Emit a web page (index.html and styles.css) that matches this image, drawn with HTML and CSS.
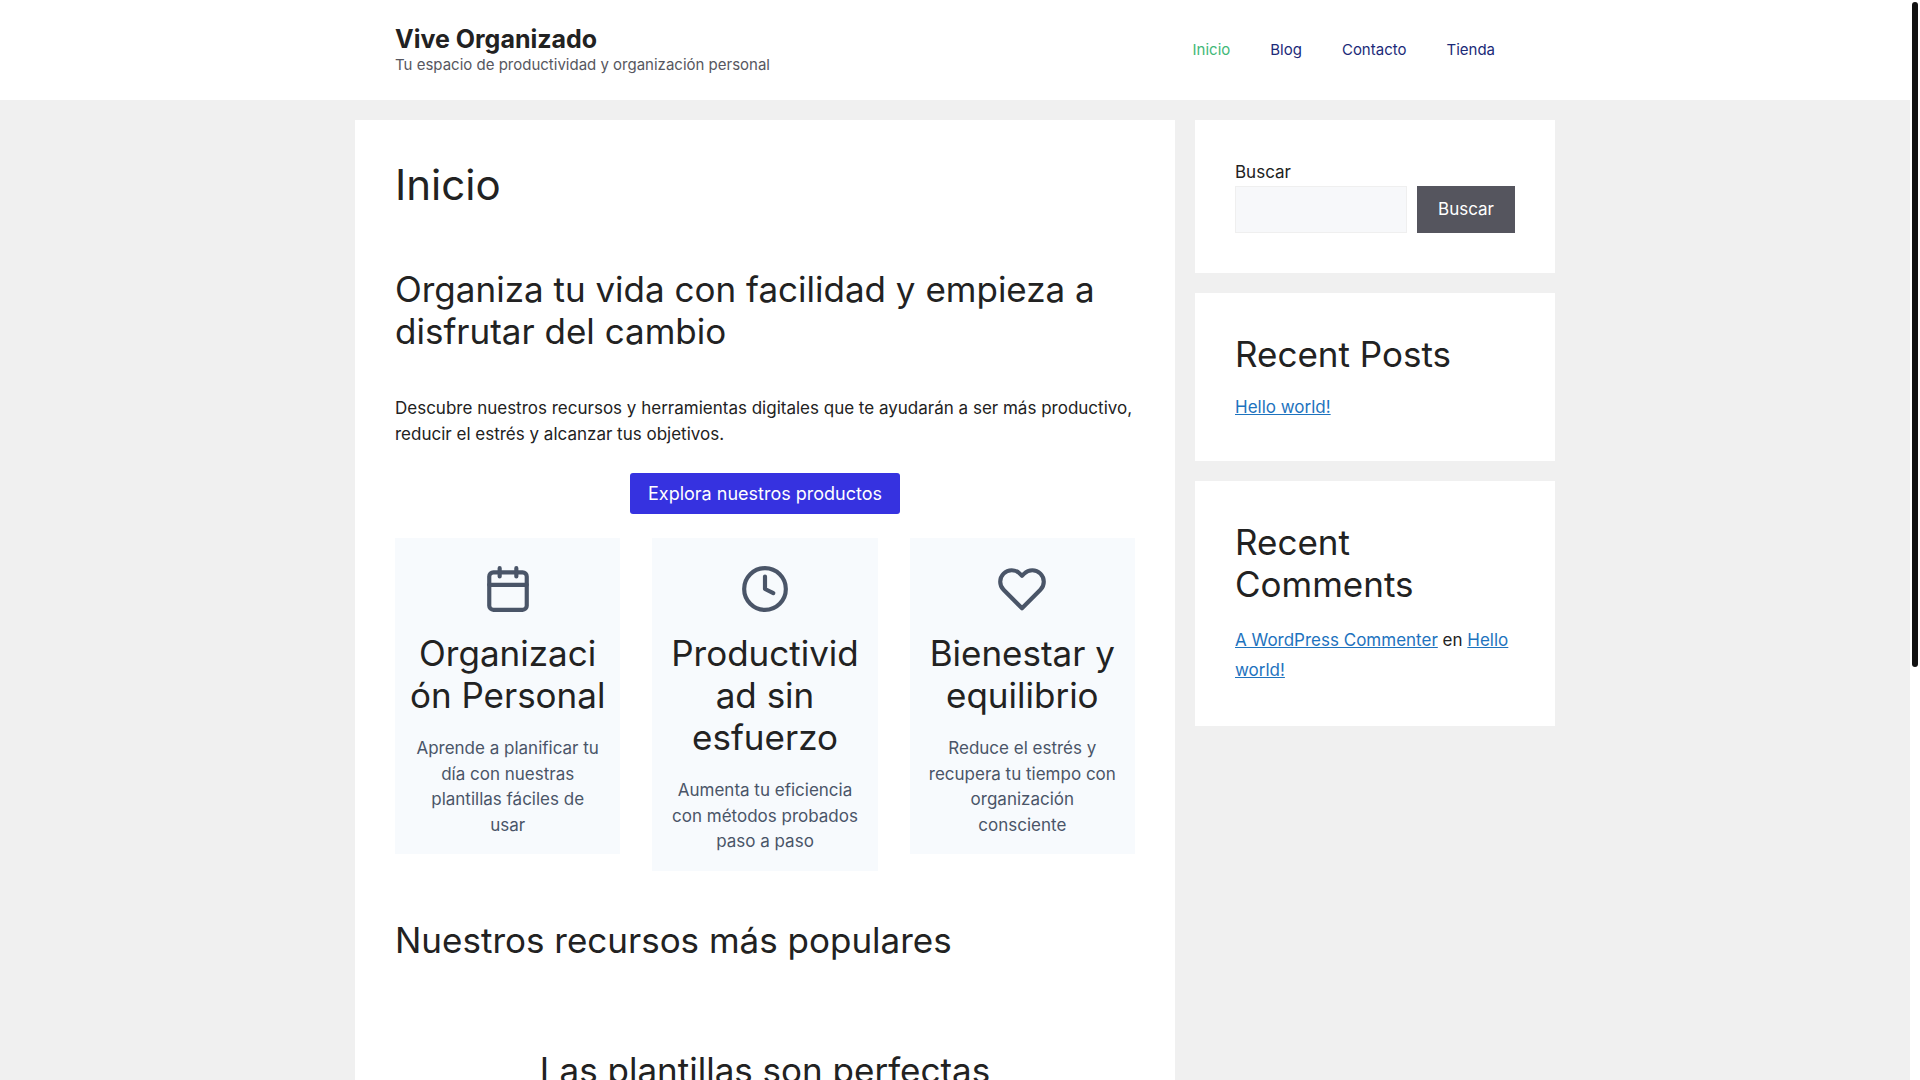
FILE: index.html
```html
<!DOCTYPE html>
<html lang="es">
<head>
<meta charset="utf-8">
<meta name="viewport" content="width=device-width, initial-scale=1">
<title>Vive Organizado</title>
<link rel="stylesheet" href="styles.css">
</head>
<body>
<div class="page">
  <header class="site-header">
    <div class="container header-inner">
      <div class="branding">
        <a class="site-title" href="#">Vive Organizado</a>
        <p class="tagline">Tu espacio de productividad y organización personal</p>
      </div>
      <nav class="main-nav">
        <a class="current" href="#">Inicio</a>
        <a href="#">Blog</a>
        <a href="#">Contacto</a>
        <a href="#">Tienda</a>
      </nav>
    </div>
  </header>

  <div class="container layout">
    <main class="content box">
      <h1>Inicio</h1>
      <section class="hero">
        <h2>Organiza tu vida con facilidad y empieza a disfrutar del cambio</h2>
        <p>Descubre nuestros recursos y herramientas digitales que te ayudarán a ser más productivo, reducir el estrés y alcanzar tus objetivos.</p>
        <a class="cta" href="#">Explora nuestros productos</a>
      </section>
      <section class="cards">
        <article class="card">
          <svg class="icon" viewBox="0 0 24 24" aria-hidden="true"><rect x="3" y="4" width="18" height="18" rx="2"/><path d="M16 2v4M8 2v4M3 10h18"/></svg>
          <h2>Organización Personal</h2>
          <p>Aprende a planificar tu día con nuestras plantillas fáciles de usar</p>
        </article>
        <article class="card">
          <svg class="icon" viewBox="0 0 24 24" aria-hidden="true"><circle cx="12" cy="12" r="10"/><path d="M12 6v6l4 2"/></svg>
          <h2>Productividad sin esfuerzo</h2>
          <p>Aumenta tu eficiencia con métodos probados paso a paso</p>
        </article>
        <article class="card">
          <svg class="icon" viewBox="0 0 24 24" aria-hidden="true"><path d="M20.84 4.61a5.5 5.5 0 0 0-7.78 0L12 5.67l-1.06-1.06a5.5 5.5 0 0 0-7.78 7.78l1.06 1.06L12 21.23l7.78-7.78 1.06-1.06a5.5 5.5 0 0 0 0-7.78z"/></svg>
          <h2>Bienestar y equilibrio</h2>
          <p>Reduce el estrés y recupera tu tiempo con organización consciente</p>
        </article>
      </section>
      <h2 class="section-title">Nuestros recursos más populares</h2>
      <h2 class="quote">Las plantillas son perfectas</h2>
    </main>

    <aside class="sidebar">
      <section class="box">
        <form class="search">
          <label for="search">Buscar</label>
          <div class="search-row">
            <input id="search" type="search">
            <button type="submit">Buscar</button>
          </div>
        </form>
      </section>
      <section class="box">
        <h2>Recent Posts</h2>
        <ul class="posts"><li><a href="#">Hello world!</a></li></ul>
      </section>
      <section class="box">
        <h2>Recent Comments</h2>
        <ol class="comments"><li><a href="#">A WordPress Commenter</a> en <a href="#">Hello world!</a></li></ol>
      </section>
    </aside>
  </div>
</div>
<div class="scroll-rail" aria-hidden="true"><div class="scroll-thumb"></div></div>
</body>
</html>
```
FILE: styles.css
```css
* { box-sizing: border-box; }

body, h1, h2, p, ul, ol {
  margin: 0;
  padding: 0;
}

body {
  font-family: Inter, "Liberation Sans", sans-serif;
  font-size: 17px;
  line-height: 1.5;
  color: #222;
  background: #f0f0f0;
}

.page {
  height: 100vh;
  overflow-y: auto;
  scrollbar-width: none;
  padding-right: 10px;
}

.container {
  max-width: 1200px;
  margin: 0 auto;
}

h1, h2 {
  font-weight: 400;
  line-height: 1.2;
}

h1 { font-size: 42px; }
h2 { font-size: 35px; }

a { color: #1e73be; }
ul, ol { list-style: none; }

/* Header */
.site-header { background: #fff; }

.header-inner {
  display: flex;
  justify-content: space-between;
  align-items: center;
  padding: 20px 40px;
}

.site-title {
  display: block;
  font-size: 25px;
  font-weight: 700;
  line-height: 30px;
  color: #222;
  text-decoration: none;
}

.tagline {
  font-size: 15px;
  color: #575760;
}

.main-nav { display: flex; }

.main-nav a {
  padding: 0 20px;
  font-size: 15px;
  line-height: 60px;
  color: #1b2a78;
  text-decoration: none;
}

.main-nav .current { color: #3fb878; }

/* Columns */
.layout {
  display: grid;
  grid-template-columns: minmax(0, 1fr) 360px;
  align-items: start;
  gap: 20px;
  padding-top: 20px;
}

.box {
  padding: 40px;
  background: #fff;
}

.hero {
  display: flex;
  flex-direction: column;
  padding-top: 58px;
}

.hero p { margin: 44px 0 26px; }

.cta {
  align-self: center;
  padding: 7px 18px;
  border-radius: 3px;
  background: #3632e0;
  color: #fff;
  font-size: 18px;
  text-decoration: none;
}

.cards {
  display: grid;
  grid-template-columns: repeat(3, minmax(0, 1fr));
  align-items: start;
  gap: 32px;
  padding-top: 24px;
}

.card {
  padding: 26px 14px 16px;
  background: #f7fafd;
  text-align: center;
  overflow-wrap: break-word;
}

.card p {
  margin-top: 20px;
  padding: 0 4px;
  color: #4a5568;
}

.icon {
  display: block;
  width: 50px;
  height: 50px;
  margin: 0 auto 18px;
  fill: none;
  stroke: #4a5568;
  stroke-width: 2;
  stroke-linecap: round;
  stroke-linejoin: round;
}

.section-title { margin-top: 48px; }

.quote {
  margin-top: 88px;
  text-align: center;
}

/* Sidebar */
.sidebar {
  display: grid;
  grid-template-columns: minmax(0, 1fr);
  gap: 20px;
}

.sidebar h2 { margin-bottom: 20px; }

.search label { display: block; }

.search-row {
  display: flex;
  gap: 10px;
}

.search input {
  flex: 1;
  min-width: 0;
  padding: 10px 15px;
  border: 1px solid #efefef;
  border-radius: 0;
  background: #f7f8fa;
  font: inherit;
}

.search button {
  padding: 10px 20px;
  border: 1px solid #55555e;
  background: #55555e;
  color: #fff;
  font: inherit;
}

.comments { line-height: 1.8; }

/* Scrollbar overlay */
.scroll-rail {
  position: fixed;
  top: 0;
  right: 0;
  bottom: 0;
  width: 10px;
  padding: 2px;
  background: #fff;
}

.scroll-thumb {
  height: 665px;
  border-radius: 3px;
  background: #111;
}
```
